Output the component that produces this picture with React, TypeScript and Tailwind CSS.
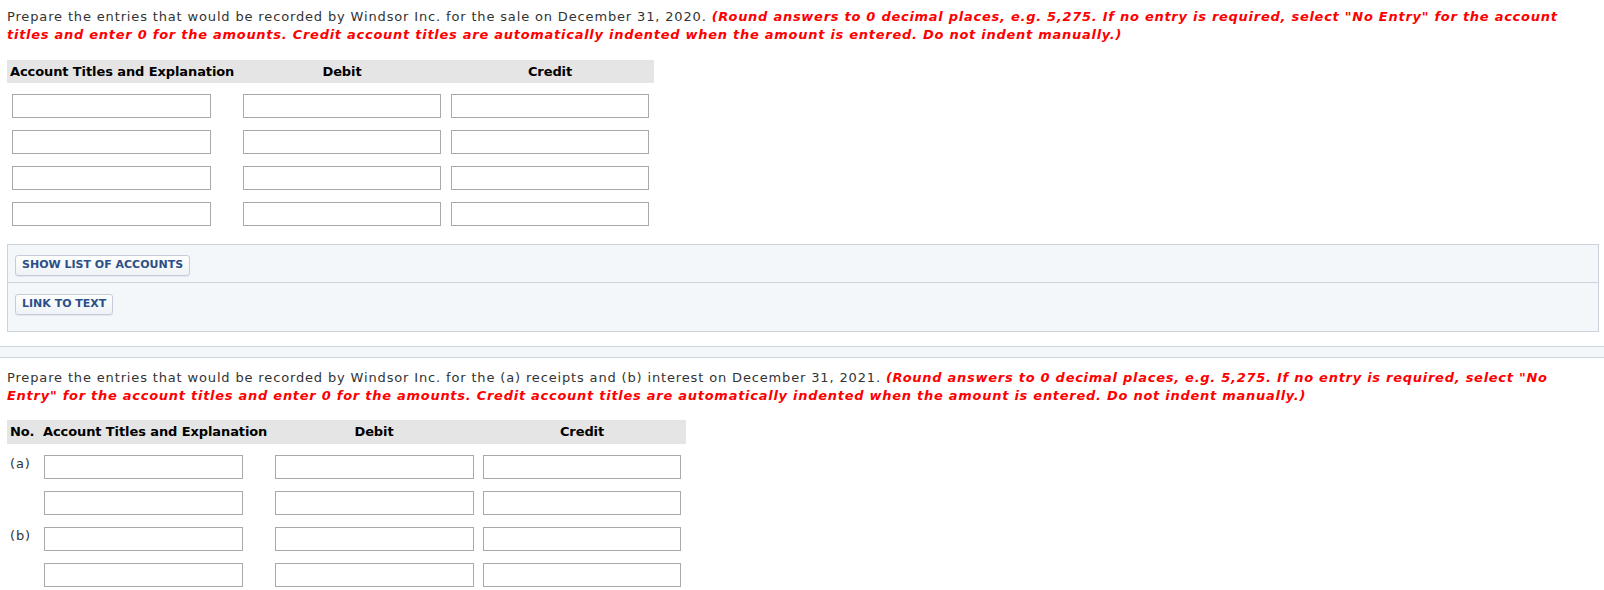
import React from "react";

const Input = ({ w }: { w: string }) => (
  <div className={`${w} h-[24px] border border-[#a9a9a9] bg-white`} />
);

function Row1() {
  return (
    <div className="flex h-[24px] pl-[5px]">
      <Input w="w-[199px]" />
      <div className="w-[32px]" />
      <Input w="w-[198px]" />
      <div className="w-[10px]" />
      <Input w="w-[198px]" />
    </div>
  );
}

function Row2({ label }: { label?: string }) {
  return (
    <div className="flex h-[24px]">
      <div className="w-[37px] pl-[3px] leading-[18px] text-[#333] tracking-[0.85px]">{label}</div>
      <Input w="w-[199px]" />
      <div className="w-[32px]" />
      <Input w="w-[199px]" />
      <div className="w-[9px]" />
      <Input w="w-[198px]" />
    </div>
  );
}

const Btn = ({ children }: { children: React.ReactNode }) => (
  <div className="inline-flex items-center h-[21px] px-[6px] rounded-[3px] border border-[#c5cdd8] bg-gradient-to-b from-[#ffffff] to-[#eef2f6] text-[11px] font-bold text-[#2b4f86] font-['DejaVu_Sans'] shadow-[0_1px_0_#e3e8ee]">
    {children}
  </div>
);

const red = "text-[#ff0000] font-bold italic tracking-[0.73px]";
const head = "bg-[#e5e5e5] flex items-center font-bold text-black tracking-[-0.1px]";

export default function App() {
  return (
    <div className="font-['DejaVu_Sans',sans-serif] text-[13px] text-[#333] bg-white w-[1604px] h-[590px] overflow-hidden">
      <div className="px-[7px]">
        <p className="pt-[8px] leading-[18px] tracking-[0.85px] whitespace-nowrap">
          Prepare the entries that would be recorded by Windsor Inc. for the sale on December 31, 2020.{" "}
          <span className={red}>
            (Round answers to 0 decimal places, e.g. 5,275. If no entry is required, select "No Entry" for the account
            <br />
            titles and enter 0 for the amounts. Credit account titles are automatically indented when the amount is entered. Do not indent manually.)
          </span>
        </p>

        <div className={`mt-[16px] w-[647px] h-[23px] ${head}`}>
          <div className="w-[231px] pl-[3px] whitespace-nowrap">Account Titles and Explanation</div>
          <div className="w-[208px] text-center">Debit</div>
          <div className="flex-1 text-center">Credit</div>
        </div>

        <div className="mt-[11px] flex flex-col gap-[12px]">
          <Row1 />
          <Row1 />
          <Row1 />
          <Row1 />
        </div>

        <div className="mt-[18px] mr-[-2px] border border-[#ccd3dc] bg-[#f4f7fa]">
          <div className="h-[38px] pl-[7px] pt-[9px] border-b border-[#ccd3dc]">
            <Btn>SHOW LIST OF ACCOUNTS</Btn>
          </div>
          <div className="h-[48px] pl-[7px] pt-[10px]">
            <Btn>LINK TO TEXT</Btn>
          </div>
        </div>
      </div>

      <div className="mt-[14px] h-[12px] border-y border-[#ccd3dc] bg-[#f4f7fa]" />

      <div className="px-[7px]">
        <p className="pt-[11px] leading-[18px] tracking-[0.85px] whitespace-nowrap">
          Prepare the entries that would be recorded by Windsor Inc. for the (a) receipts and (b) interest on December 31, 2021.{" "}
          <span className={red}>
            (Round answers to 0 decimal places, e.g. 5,275. If no entry is required, select "No
            <br />
            Entry" for the account titles and enter 0 for the amounts. Credit account titles are automatically indented when the amount is entered. Do not indent manually.)
          </span>
        </p>

        <div className={`mt-[15px] w-[679px] h-[24px] ${head}`}>
          <div className="w-[36px] pl-[3px]">No.</div>
          <div className="w-[227px] whitespace-nowrap">Account Titles and Explanation</div>
          <div className="w-[208px] text-center">Debit</div>
          <div className="flex-1 text-center">Credit</div>
        </div>

        <div className="mt-[11px] flex flex-col gap-[12px]">
          <Row2 label="(a)" />
          <Row2 />
          <Row2 label="(b)" />
          <Row2 />
        </div>
      </div>
    </div>
  );
}
